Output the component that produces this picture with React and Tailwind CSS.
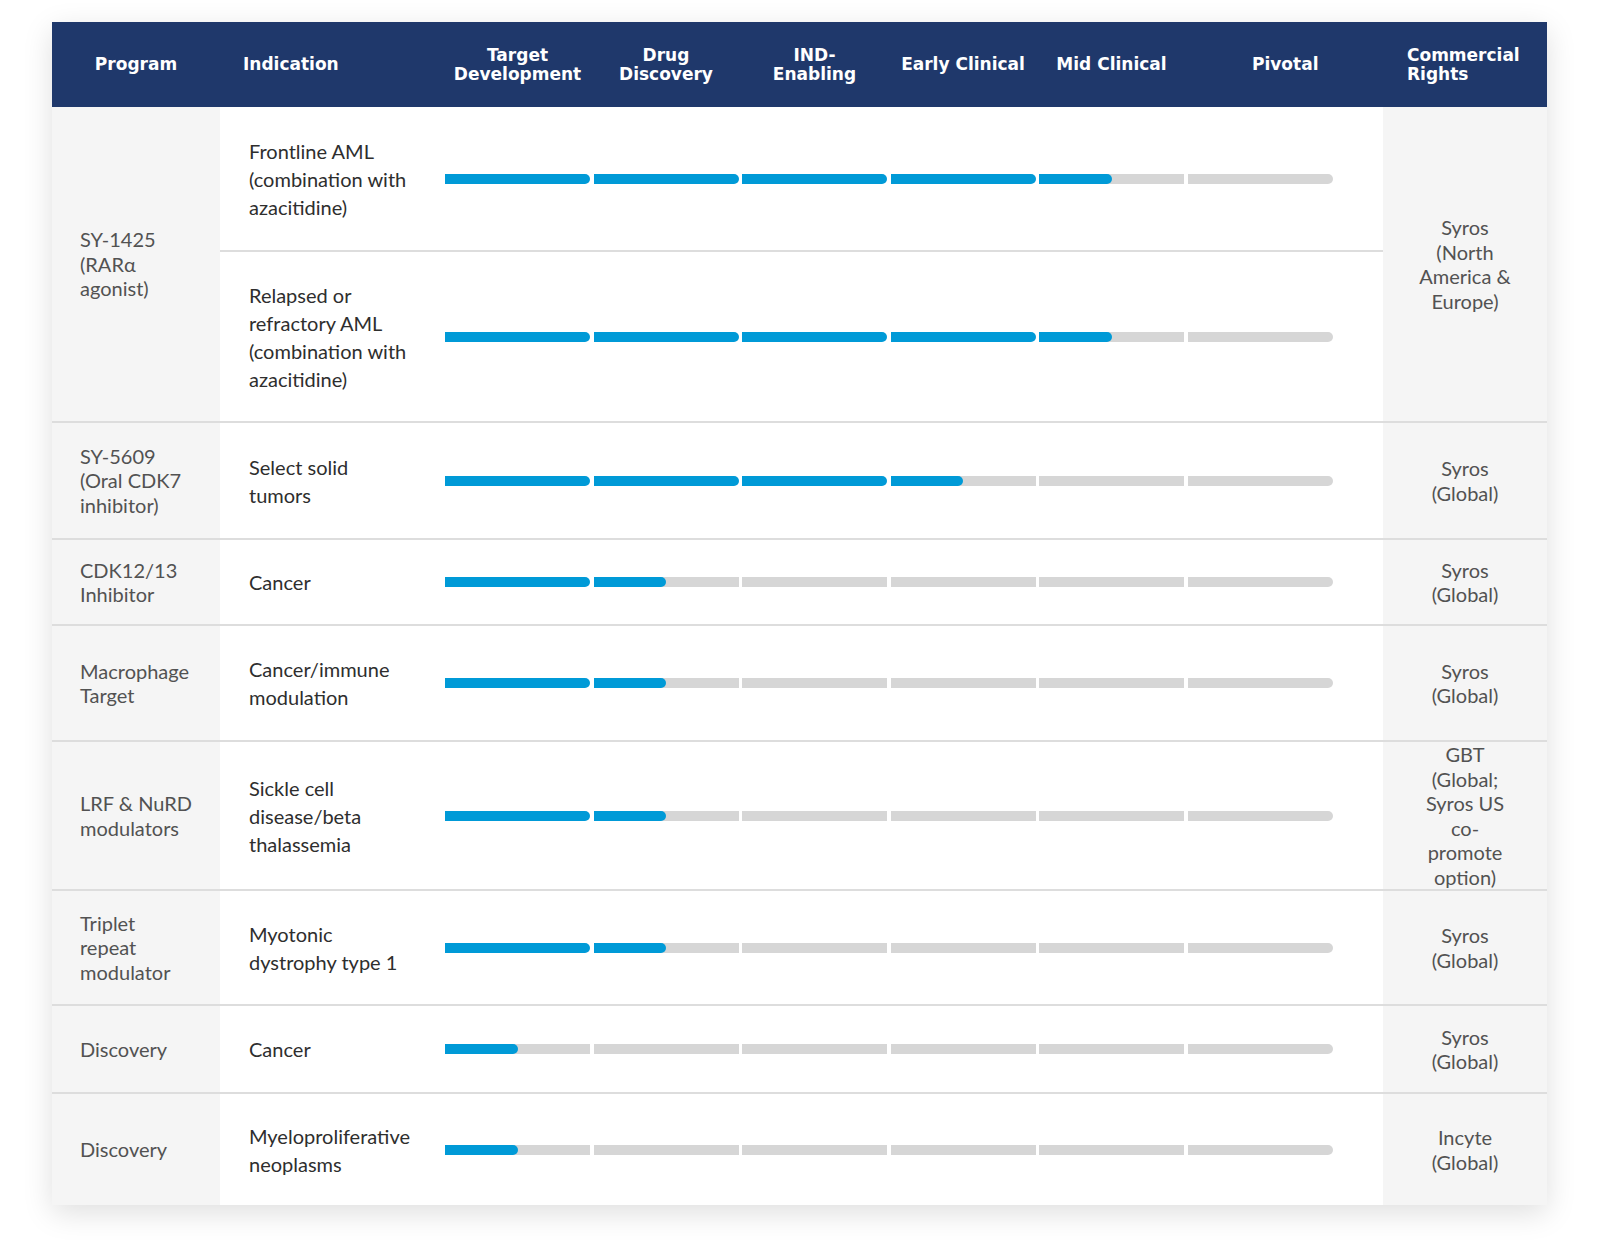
import React from "react";

// pipeline table: fill = number of phase segments completed (0-6)
const rows = [
  {
    program: ["SY-1425", "(RARα", "agonist)"],
    rights: ["Syros", "(North", "America &", "Europe)"],
    height: "h-[314px]",
    subs: [
      { indication: ["Frontline AML", "(combination with", "azacitidine)"], fill: 4.5, height: "h-[143px]" },
      { indication: ["Relapsed or", "refractory AML", "(combination with", "azacitidine)"], fill: 4.5, height: "flex-1" },
    ],
  },
  {
    program: ["SY-5609", "(Oral CDK7", "inhibitor)"],
    rights: ["Syros", "(Global)"],
    height: "h-[117px]",
    subs: [{ indication: ["Select solid", "tumors"], fill: 3.5 }],
  },
  {
    program: ["CDK12/13", "Inhibitor"],
    rights: ["Syros", "(Global)"],
    height: "h-[86px]",
    subs: [{ indication: ["Cancer"], fill: 1.5 }],
  },
  {
    program: ["Macrophage", "Target"],
    rights: ["Syros", "(Global)"],
    height: "h-[116px]",
    subs: [{ indication: ["Cancer/immune", "modulation"], fill: 1.5 }],
  },
  {
    program: ["LRF & NuRD", "modulators"],
    rights: ["GBT", "(Global;", "Syros US", "co-", "promote", "option)"],
    height: "h-[149px]",
    subs: [{ indication: ["Sickle cell", "disease/beta", "thalassemia"], fill: 1.5 }],
  },
  {
    program: ["Triplet", "repeat", "modulator"],
    rights: ["Syros", "(Global)"],
    height: "h-[115px]",
    subs: [{ indication: ["Myotonic", "dystrophy type 1"], fill: 1.5 }],
  },
  {
    program: ["Discovery"],
    rights: ["Syros", "(Global)"],
    height: "h-[88px]",
    subs: [{ indication: ["Cancer"], fill: 0.5 }],
  },
  {
    program: ["Discovery"],
    rights: ["Incyte", "(Global)"],
    height: "h-[113px]",
    subs: [{ indication: ["Myeloproliferative", "neoplasms"], fill: 0.5 }],
  },
];

const phases = [
  ["Target", "Development"],
  ["Drug", "Discovery"],
  ["IND-", "Enabling"],
  ["Early Clinical"],
  ["Mid Clinical"],
];

function Lines({ lines }) {
  return lines.map((l, i) => (
    <React.Fragment key={i}>
      {i > 0 && <br />}
      {l}
    </React.Fragment>
  ));
}

function Bars({ fill }) {
  return (
    <div className="flex items-center gap-[3.5px]">
      {[0, 1, 2, 3, 4, 5].map((i) => {
        const f = Math.max(0, Math.min(1, fill - i));
        if (f === 1) {
          return <div key={i} className="h-[10px] w-[145px] rounded-r-full bg-[#009ad7]" />;
        }
        return (
          <div
            key={i}
            className={
              i === 5
                ? "h-[10px] w-[145px] overflow-hidden rounded-r-full bg-[#d6d6d6]"
                : "h-[10px] w-[145px] overflow-hidden bg-[#d6d6d6]"
            }
          >
            {f > 0 && <div className="h-full rounded-r-full bg-[#009ad7]" style={{ width: `${f * 100}%` }} />}
          </div>
        );
      })}
    </div>
  );
}

export default function App() {
  const head = "font-['DejaVu_Sans',sans-serif] text-[17px] font-bold leading-[18.5px] text-white";
  return (
    <div className="min-h-[1258px] bg-white pt-[22px] pl-[52px]">
      <div className="w-[1495px] bg-white shadow-[0_8px_28px_rgba(0,0,0,0.13)]">
        {/* header */}
        <div className={`flex h-[85px] items-center bg-[#1f386b] ${head}`}>
          <div className="w-[168px] text-center">Program</div>
          <div className="w-[225px] pl-[23px]">Indication</div>
          {phases.map((p, i) => (
            <div key={i} className="w-[148.5px] pr-[3.5px] text-center">
              <Lines lines={p} />
            </div>
          ))}
          <div className="w-[195.5px] text-center">Pivotal</div>
          <div className="w-[164px] pl-[24px]">
            Commercial
            <br />
            Rights
          </div>
        </div>

        {/* body */}
        {rows.map((r, ri) => (
          <div
            key={ri}
            className={
              ri === 0
                ? `flex ${r.height} font-['Lato',sans-serif]`
                : `flex ${r.height} border-t-2 border-[#dddddd] font-['Lato',sans-serif]`
            }
          >
            <div className="flex w-[168px] items-center bg-[#f5f5f5] pl-[28px] text-[20px] leading-[24.5px] text-[#525252]">
              <div>
                <Lines lines={r.program} />
              </div>
            </div>
            <div className="flex w-[1163px] flex-col">
              {r.subs.map((s, si) => (
                <div
                  key={si}
                  className={
                    si === 0
                      ? `flex ${s.height || "flex-1"} items-center`
                      : `flex ${s.height || "flex-1"} items-center border-t-2 border-[#dddddd]`
                  }
                >
                  <div className="w-[225px] pl-[29px] text-[20px] leading-[28px] text-[#2e2e2e]">
                    <Lines lines={s.indication} />
                  </div>
                  <Bars fill={s.fill} />
                </div>
              ))}
            </div>
            <div className="flex w-[164px] items-center justify-center bg-[#f5f5f5] text-center text-[20px] leading-[24.5px] text-[#525252]">
              <div>
                <Lines lines={r.rights} />
              </div>
            </div>
          </div>
        ))}
      </div>
    </div>
  );
}
